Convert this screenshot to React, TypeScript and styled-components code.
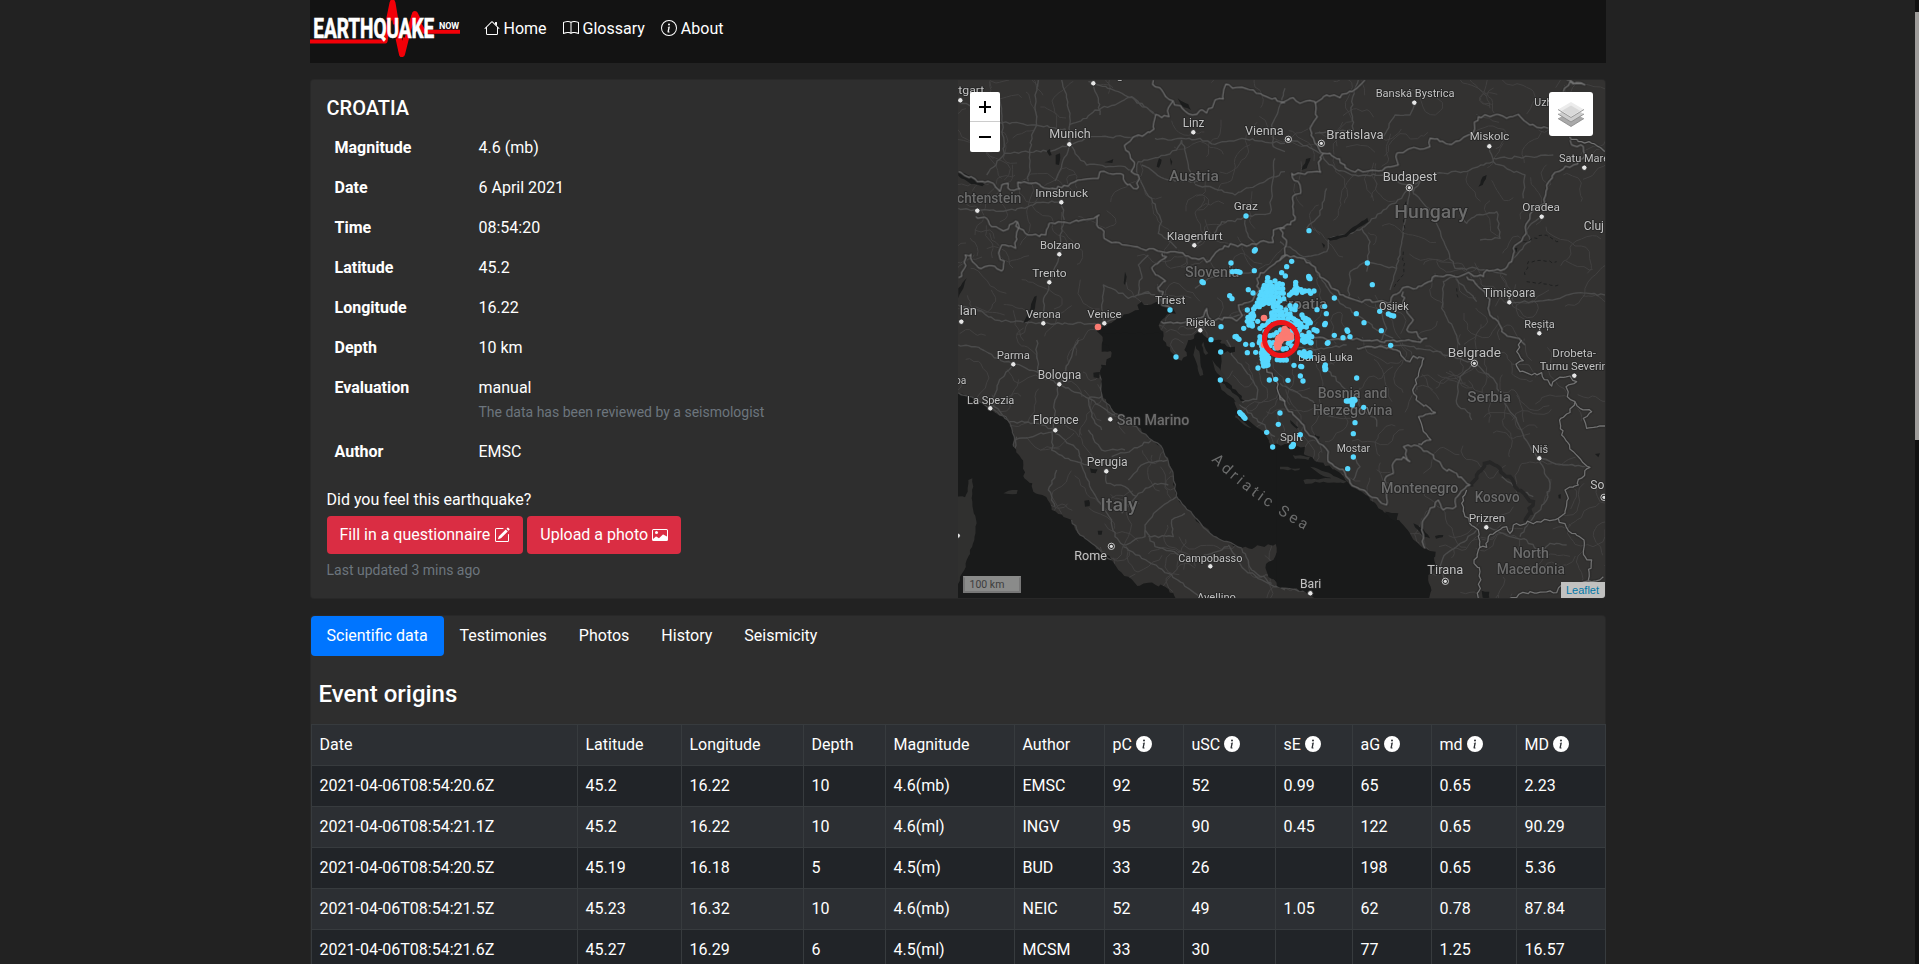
import React from "react";
import styled, { createGlobalStyle } from "styled-components";
import { BsBook, BsInfoCircle, BsInfoCircleFill, BsPencilSquare, BsCardImage } from "react-icons/bs";

const GlobalStyle = createGlobalStyle`
  *, *::before, *::after { box-sizing: border-box; }
  html, body { margin: 0; height: 964px; overflow: hidden; }
  body {
    background: #222;
    color: #fff;
    font-family: Roboto, "Liberation Sans", sans-serif;
    font-size: 16px;
    line-height: 1.5;
  }
`;

const Page = styled.div`
  display: flex;
  justify-content: space-between;
  height: 964px;
  padding-left: 309.5px;
  overflow: hidden;
`;

const Container = styled.div`
  width: 1296px;
  flex: none;
`;

const ScrollTrack = styled.div`
  width: 4px;
  height: 964px;
  padding-top: 12px;
  background: #111;
`;

const ScrollThumb = styled.div`
  height: 428px;
  background: #9f9d9b;
`;

const Navbar = styled.nav`
  display: flex;
  height: 63px;
  margin-bottom: 16px;
  background: #131313;
`;

const NavLinks = styled.div`
  display: flex;
  gap: 16px;
  padding: 17px 0 0 24px;
`;

const NavLink = styled.a`
  display: flex;
  gap: 4px;
  height: 24px;
  color: #fff;
  svg { margin-top: 3px; }
`;

const Card = styled.section`
  display: flex;
  height: 520px;
  margin-bottom: 16px;
  border: 1px solid rgba(0, 0, 0, 0.125);
  border-radius: 4px;
  background: #2e2e2e;
  overflow: hidden;
`;

const Info = styled.div`
  width: 647px;
  padding: 16px;
`;

const Place = styled.h5`
  margin: 0 0 8px;
  font-size: 20px;
  line-height: 24px;
  font-weight: 500;
`;

const Facts = styled.dl`
  display: grid;
  grid-template-columns: 144px 1fr;
  margin: 0 0 16px;
`;

const Term = styled.dt`
  padding: 8px;
  font-weight: 700;
`;

const Value = styled.dd`
  margin: 0;
  padding: 8px;
`;

const Muted = styled.small`
  display: block;
  font-size: 14px;
  line-height: 24px;
  color: #6c757d;
`;

const Question = styled.p`
  margin: 0 0 4px;
`;

const Actions = styled.div`
  display: flex;
  gap: 4px;
  margin-bottom: 4px;
`;

const Action = styled.button`
  display: flex;
  align-items: center;
  gap: 4px;
  height: 38px;
  padding: 0 13px;
  border: 0;
  border-radius: 4px;
  background: #da2d43;
  color: #fff;
  font: inherit;
  white-space: nowrap;
`;

const MapPane = styled.div`
  position: relative;
  width: 647px;
  height: 518px;
`;

const MapCanvas = styled.svg`
  display: block;
  font-family: "Roboto", sans-serif;
`;

const ZoomControl = styled.div`
  position: absolute;
  left: 12px;
  top: 12px;
  width: 30px;
  border-radius: 2px;
  background: #fff;
  overflow: hidden;
`;

const ZoomButton = styled.div`
  display: flex;
  justify-content: center;
  align-items: center;
  height: 30px;
  color: #000;
  &:first-child { border-bottom: 1px solid #ccc; }
`;

const LayersControl = styled.div`
  position: absolute;
  left: 591px;
  top: 12px;
  display: grid;
  place-items: center;
  width: 44px;
  height: 44px;
  border-radius: 3px;
  background: #fff;
`;

const ScaleBar = styled.div`
  position: absolute;
  left: 5px;
  top: 496px;
  width: 58px;
  height: 17px;
  padding-left: 5px;
  border: 2px solid #777;
  border-top-color: #8a8b8a;
  background: #8a8b8a;
  color: #3d3d3d;
  font-size: 10.5px;
  line-height: 13px;
`;

const Attribution = styled.div`
  position: absolute;
  right: 0;
  bottom: 0;
  width: 44px;
  height: 16px;
  background: #c1c1c0;
  color: #0078a8;
  font: 11px/17px "Liberation Sans", Arial, sans-serif;
  text-align: center;
`;

const DataCard = styled.section`
  height: 500px;
  border: 1px solid rgba(0, 0, 0, 0.125);
  border-radius: 4px;
  background: #2e2e2e;
`;

const Tabs = styled.div`
  display: flex;
`;

const Tab = styled.a<{ $active?: boolean }>`
  padding: 8px 16px;
  border-radius: 4px;
  color: #fff;
  background: ${(p) => (p.$active ? "#0075ff" : "transparent")};
`;

const Heading = styled.h4`
  margin: 24px 0 15px;
  padding-left: 8px;
  font-size: 24px;
  line-height: 28.8px;
  font-weight: 500;
`;

const Table = styled.table`
  width: 1294px;
  table-layout: fixed;
  border-collapse: collapse;
`;

const Row = styled.tr<{ $dark?: boolean }>`
  height: 41px;
  background: ${(p) => (p.$dark ? "#212428" : "#2c2f33")};
`;

const Cell = styled.td`
  height: 41px;
  padding: 8px;
  border: 1px solid #373b3e;
  line-height: 24px;
  white-space: nowrap;
`;

const HeadLabel = styled.span`
  display: flex;
  gap: 4px;
  svg { margin-top: 3px; }
`;

function HouseIcon() {
  return (
    <svg width="16" height="16" viewBox="0 0 16 16" fill="currentColor">
      <path fillRule="evenodd" d="M2 13.5V7h1v6.5a.5.5 0 0 0 .5.5h9a.5.5 0 0 0 .5-.5V7h1v6.5a1.5 1.5 0 0 1-1.5 1.5h-9A1.5 1.5 0 0 1 2 13.5zm11-11V6l-2-2V2.5a.5.5 0 0 1 .5-.5h1a.5.5 0 0 1 .5.5z" />
      <path fillRule="evenodd" d="M7.293 1.5a1 1 0 0 1 1.414 0l6.647 6.646a.5.5 0 0 1-.708.708L8 2.207 1.354 8.854a.5.5 0 1 1-.708-.708L7.293 1.5z" />
    </svg>
  );
}

function Logo() {
  return (
    <svg width="150" height="63" viewBox="0 0 150 63">
      <g fill="none" stroke="#f30008" strokeLinejoin="round">
        <path strokeWidth="4" d="M0 41.5H75.5L82.5 1 91.5 55 104 14 114 31.7H150" />
        <path strokeWidth="6" d="M79 20L82.5 3 86 24M88.5 38L92 54 96 38M102 24L105 14 110 24" />
      </g>
      <g fill="#fff" fontFamily="Roboto, sans-serif" fontWeight="700">
        <text x="3.3" y="38.3" fontSize="28.5" textLength="121" lengthAdjust="spacingAndGlyphs" stroke="#fff" strokeWidth="0.7">EARTHQUAKE</text>
        <text x="129" y="29" fontSize="9" textLength="20" lengthAdjust="spacing">NOW</text>
      </g>
    </svg>
  );
}

/* The map is drawn in four quadrants; each unit is a third of a pixel. */
const QUAD = { nw: [0, 0], ne: [975, 0], sw: [0, 795], se: [975, 795] } as const;
type Quad = keyof typeof QUAD;

const sea: [Quad, string][] = [
  ["nw", "M425 768L440 757 500 728 530 712 552 705 547 690 560 680 580 690 605 680 632 692 655 702 663 716 645 716 620 735 611 752 625 770 622 795 628 830 440 830 448 790Z"],
  ["nw", "M705 815L718 780 737 768 755 788 768 800 840 815 840 830 705 830Z"],
  ["sw", "M443 0L470 38 468 52 455 58 453 76 438 74 440 140 455 190 480 220 545 260 590 300 618 318 640 365 655 410 664 468 690 500 740 555 775 588 860 624 900 622 962 612 973 632 955 660 933 672 940 710 985 738 1050 738 1050 320 990 312 948 318 935 290 905 262 850 215 838 185 870 182 850 160 822 130 800 108 798 45 800 0 700 0 688 30 696 48 680 62 668 58 652 40 635 18 624 0 624 -20 443 -20Z"],
  ["sw", "M0 155L60 178 110 205 145 228 165 250 178 290 176 320 192 345 205 375 208 415 232 430 235 455 262 465 285 490 290 510 310 522 350 540 375 585 410 610 435 630 470 660 490 690 530 718 547 738 580 728 630 740 655 760 665 780 0 780Z"],
  ["se", "M-10 322L40 318 75 345 130 368 175 395 205 428 245 455 290 495 320 520 370 555 395 590 430 625 467 635 462 685 445 705 452 740 445 785 140 785 80 760 50 745 -10 738Z"],
];

const islands: [Quad, string][] = [
  ["sw", "M0 466L30 472 38 455 40 420 52 415 55 440 50 475 65 550 58 600 35 660 28 690 15 710 0 770Z"],
  ["sw", "M145 460L160 452 188 450 185 462 160 462Z"],
  ["sw", "M722 15L735 45 738 80 745 105 735 108 725 70 715 45Z M745 5L760 40 752 45 740 15Z M772 60L800 95 820 125 810 125 780 90Z M790 120L850 170 870 200 850 190 800 150Z M842 225L890 265 880 262 840 232Z"],
  ["se", "M38 345L90 350 85 360 45 357Z M0 380L60 385 58 390 0 388Z M70 420L160 412 180 428 130 425 75 432Z M90 380L135 395 200 425 190 430 120 403Z"],
];

const lakes: [Quad, string][] = [
  ["nw", "M10 288L38 300 70 318 88 328 82 334 48 327 10 302Z M205 745L222 710 238 665 245 662 240 700 225 735Z M275 228L285 222 290 240 283 242Z M302 240L315 235 312 270 302 268Z M448 262L475 252 472 264Z M668 70L700 88 708 105 680 92Z M605 275L612 250 620 254 612 278Z M510 590L515 605 510 630 506 625Z M645 248L652 260 648 272Z M10 640L35 610 25 640 10 670Z"],
  ["ne", "M142 490L195 478 238 445 262 428 265 440 240 455 200 485 150 497Z M65 285L78 252 92 248 80 280Z M595 335L608 305 620 300 608 330Z M125 503L135 510 132 520Z M700 520L712 518 710 530 702 530Z"],
  ["sw", "M405 385L428 388 422 400 408 398Z M388 482L402 480 404 498 390 500Z M428 572L442 572 440 584 430 584Z M415 98L435 96 432 115 416 112Z"],
  ["se", "M105 283L120 290 116 297 106 294Z M400 550L430 568 450 595 432 590 405 562Z M605 752L628 755 628 773 608 773Z M30 240L55 262 50 266 32 250Z M465 588L490 585 488 592 468 596Z M945 342L960 340 955 352Z M835 465L842 462 842 476 836 475Z M315 515L355 520 350 545 330 535Z"],
];

const borders: [Quad, string][] = [
  ["nw", "M595 15L600 35 620 45 632 65 655 78 640 98 642 125 620 128 602 118 597 162 570 178 550 180 508 212 525 240 538 268 528 290 550 300 545 342 510 322 505 300 460 295 435 290 430 310 395 312 360 320 320 338 290 340 230 325 188 322 195 342 165 345 160 325 140 330 135 350 115 325 90 322 60 312 10 290"],
  ["nw", "M655 80L690 108 712 120 725 118 738 105 755 114 772 98 780 75 805 72 812 28 840 38 895 45 935 65 990 84"],
  ["nw", "M62 425L95 430 110 455 145 468 160 462 182 438 205 465 232 480 272 480 282 445 310 440 350 442 382 435 432 420 425 450 440 462 447 490 470 503 540 515 608 528 660 530 710 550 745 548 755 562 770 548 808 512 905 508 925 497 955 502 955 465 990 460"],
  ["nw", "M188 438L182 520 140 510 132 540 148 558 140 588 110 572 70 578 52 560 48 538 30 540 28 580 10 608"],
  ["nw", "M620 535L635 545 590 578 602 600 632 618 608 638 625 650 620 690 652 702"],
  ["nw", "M618 740L655 745 690 742 720 738 745 725 755 700 770 735 820 728 845 738 862 722 850 690 880 682 910 650 905 610 935 585 990 540"],
  ["ne", "M0 85L40 68 60 85 105 80 112 125 90 160 105 205 130 235 150 235 215 288 295 288 355 270 350 235 380 225 450 215 450 190 508 208 575 178 595 125 650 118 680 130 715 118 750 150 805 160"],
  ["ne", "M105 85L140 60 180 68 230 40 255 15 M860 15L915 30 870 20 850 50 M870 195L875 210 910 215 915 240 880 270 850 282 825 292 800 330 795 385 760 405 745 438 730 485 700 520 695 560 675 582 620 585 610 605 560 595 525 605 500 600 465 602 455 618 410 640 380 635 340 660 332 682 300 678 235 678 190 660 155 640 130 610 95 570 60 548 20 540 0 555"],
  ["ne", "M130 235L115 262 122 292 75 298 35 295 60 330 62 355 38 365 40 405 45 435 0 462 20 500 15 545 M560 605L600 640 630 672 628 712 655 740 665 770 725 800 735 810"],
  ["ne", "M370 650L370 700 400 735 380 765 410 770 415 785 440 790 410 800 340 795 300 800 230 790 150 795 90 785 60 770"],
  ["ne", "M870 185L895 200 935 205 955 215 975 230"],
  ["sw", "M935 85L965 125 975 170 990 185"],
  ["se", "M0 165L20 205 65 250 100 290 145 335 145 365 195 398 210 428 250 450 305 490 320 495 318 410 340 400 340 368 370 350 390 365 370 320 415 318 460 345 490 385 530 400 570 435 540 460 525 485 528 500 490 510 475 480 430 540 425 570 435 625"],
  ["se", "M230 25L275 20 320 25 360 35 390 65 400 48 432 55 398 150 415 185 450 205 467 218 415 230 428 265 453 300 415 312"],
  ["se", "M725 0L710 35 730 62 708 72 720 95 755 105 785 98 815 138 830 118 870 108 890 125 858 140 862 170 885 185 860 222 842 235 845 285 880 335 930 382 895 418 895 435 855 450 865 475 855 520 835 535 770 545 700 555 690 580 680 560 625 590 620 622 600 622 595 570 555 530 545 490 560 450"],
  ["se", "M835 535L875 580 912 600 915 650 935 660 925 720 M600 620L582 670 600 695 595 775 M885 185L900 205 935 215 910 235 920 265 975 258 M690 775L750 755 830 758 845 735 935 725 970 710"],
];

const roads: [Quad, string][] = [
  ["nw", "M10 80L70 100 130 140 240 150 330 162 350 208 410 185 550 185 M125 55L140 100 148 235 95 300 M148 235L300 225 345 208 370 245 395 270 510 275 545 300 M250 15L240 60 245 150 230 180 220 320 M320 15L345 115 345 208 M345 148L395 130 420 105 480 90 530 65 600 120 M415 25L430 70 435 120 M345 210L320 270 300 318 M400 20L490 50 540 75 595 115"],
  ["nw", "M600 190L650 195 735 190 780 208 860 190 920 198 990 205 M680 195L700 270 720 325 M720 328L800 345 840 360 865 345 905 330 990 290 M680 195L665 225 610 248 550 260 545 290 570 345 590 370 620 440 610 475 665 520 M990 40L975 90 950 150 955 215 990 230 M730 320L640 315 560 270"],
  ["nw", "M10 400L70 408 160 405 210 400 245 382 320 380 328 435 M328 440L315 480 318 540 285 620 265 680 265 745 M10 690L70 705 120 735 265 745 445 745 500 730 M445 745L440 690 445 630 470 640 520 670 580 650 640 690 M870 435L880 485 905 515 M870 425L840 440 800 440 775 480 715 510 M870 425L945 415 960 250 M580 540L550 570 560 600 550 660 585 655 M720 640L760 610 830 600 900 590 M735 765L790 730 870 720"],
  ["ne", "M30 190L120 235 165 280 215 300 310 300 388 335 470 295 550 290 640 260 M628 215L640 260 690 285 735 300 730 370 M388 338L365 370 310 405 270 440 240 465 150 490 140 530 60 550 M388 338L375 440 360 530 350 580 330 645 M388 338L430 385 465 430 500 520 525 580 590 580 680 600 M235 15L215 80 220 165 105 175 M405 85L390 120 345 120 310 185 M525 600L490 620 485 700 520 760 540 810 M525 605L555 640 590 680 M688 682L765 680 830 672 880 655 975 660 M0 500L90 560 150 650 190 690 300 770 340 790"],
  ["ne", "M785 425L755 445 740 465 750 500 690 560 M540 420L560 445 590 420 650 410 660 490 600 495 M210 590L260 560 350 580 M210 590L205 670 M300 710L320 760 300 800 M640 250L750 245 820 240 M400 300L420 320 400 350 M140 340L120 420 80 460 M245 460L270 500 260 590"],
  ["sw", "M10 15L60 20 130 55 245 95 313 132 400 175 480 225 M313 132L300 180 295 270 M295 270L330 300 370 330 385 390 420 465 470 540 480 590 505 615 M175 70L130 130 110 190 165 248 M165 245L250 250 300 272 180 300 M245 0L248 95 M370 0L345 60 315 130 M440 100L440 170 400 175 M665 470L620 500 570 555 570 590 505 615 M505 620L560 655 640 700 700 745 740 775 M570 570L600 620 720 660 820 620 M640 435L600 430 550 460 500 520 M690 520L650 540 655 590 580 590 M860 625L890 690 950 730"],
  ["sw", "M640 360L570 370 520 420 M455 395L455 430 510 440 545 470 M300 500L280 450 305 390 M295 270L290 330 330 355 400 375 M400 175L410 230 440 270 M510 330L440 330 400 270 M590 300L530 330 470 350 M180 350L185 290 M820 615L870 690 930 725 990 750 M815 0L835 50 870 90 905 140 905 178 870 182 855 195 920 250 960 290"],
  ["se", "M583 70L540 110 530 190 570 220 575 240 M583 70L640 115 665 175 700 225 730 285 765 340 778 355 M778 355L850 375 920 380 M778 355L810 430 800 480 755 540 720 590 M583 70L520 50 450 30 390 20 300 15 M0 10L100 30 200 15 M135 80L180 130 230 170 M230 170L245 210 290 240 290 260 M220 350L240 380 220 420 M0 130L90 180 160 230 M495 722L480 680 500 640 560 600 590 570 M0 740L90 760 M665 410L700 440 760 470 M620 560L690 590 740 600 780 640 810 610 860 615"],
];

const coast: [Quad, string][] = [
  ["sw", "M440 170L455 190 480 220 545 260 590 300 618 318 640 365 655 410 664 468 690 500 740 555 775 588 860 624 M10 158L60 178 110 205 145 228 165 250 178 290 176 320"],
  ["sw", "M350 540L375 585 410 610 435 630 470 660"],
];

const shade: [Quad, string][] = [
  ["se", "M575 440L590 405 625 368 660 385 690 410 715 450 760 485 735 545"],
];

const brooks: [Quad, string][] = [
  ["ne", "M735 600L745 560 830 560 M730 500L790 480 840 500 M740 620L835 630 M530 640L535 670 M370 530L370 600 340 640 M378 380L370 470"],
];

/** Small deterministic generator for the web of minor roads. */
function minorRoads(): string {
  let s = 71;
  const r = () => ((s = (s * 16807) % 2147483647) / 2147483647);
  let d = "";
  for (let i = 0; i < 340; i++) {
    let x = r() * 1980;
    let y = r() * 1590;
    let a = r() * 6.28;
    d += `M${x.toFixed(0)} ${y.toFixed(0)}`;
    const n = 5 + Math.floor(r() * 10);
    for (let k = 0; k < n; k++) {
      a += (r() - 0.5) * 1.8;
      const l = 8 + r() * 14;
      x += Math.cos(a) * l;
      y += Math.sin(a) * l;
      d += `L${x.toFixed(0)} ${y.toFixed(0)}`;
    }
  }
  return d;
}

/** Breaks long straight segments into slightly irregular ones, as surveyed lines have. */
function rough(d: string, amount: number): string {
  let s = 29;
  const r = () => ((s = (s * 16807) % 2147483647) / 2147483647 - 0.5);
  return d
    .split("M")
    .filter((p) => p.trim())
    .map((part) => {
      const closed = part.includes("Z");
      const n = (part.match(/-?\d+/g) || []).map(Number);
      let out = `M${n[0]} ${n[1]}`;
      for (let i = 2; i + 1 < n.length; i += 2) {
        const dx = n[i] - n[i - 2];
        const dy = n[i + 1] - n[i - 1];
        const steps = Math.max(1, Math.round(Math.hypot(dx, dy) / 11));
        for (let k = 1; k < steps; k++) {
          out += `L${(n[i - 2] + (dx * k) / steps + r() * amount).toFixed(1)} ${(n[i - 1] + (dy * k) / steps + r() * amount).toFixed(1)}`;
        }
        out += `L${n[i]} ${n[i + 1]}`;
      }
      return out + (closed ? "Z" : "");
    })
    .join("");
}

type Label = [Quad, string, number, number, number, number, ("country" | "city")?];
/* quadrant, text, left, baseline, width, size, kind */
const labels: Label[] = [
  ["nw", "tgart", 10, 58, 78, 35],
  ["nw", "Nuremberg", 325, 13, 180, 35],
  ["nw", "Munich", 283, 188, 124, 36],
  ["nw", "Linz", 683, 156, 65, 36],
  ["nw", "Vienna", 870, 180, 116, 38],
  ["nw", "Austria", 642, 318, 150, 43, "country"],
  ["nw", "chtenstein", 6, 385, 193, 42, "country"],
  ["nw", "Innsbruck", 241, 366, 158, 35],
  ["nw", "Graz", 836, 405, 73, 35],
  ["nw", "Klagenfurt", 635, 495, 168, 35],
  ["nw", "Bolzano", 255, 522, 121, 35],
  ["nw", "Slovenia", 690, 606, 163, 42, "country"],
  ["nw", "Trento", 232, 605, 103, 35],
  ["nw", "Triest", 600, 686, 91, 34],
  ["nw", "lan", 14, 721, 52, 38],
  ["nw", "Verona", 213, 729, 104, 34],
  ["nw", "Venice", 397, 728, 103, 34],
  ["nw", "Rijeka", 692, 752, 90, 34],
  ["ne", "Banská Bystrica", 287, 67, 237, 35],
  ["ne", "Uzh", 763, 92, 54, 35],
  ["ne", "Bratislava", 139, 192, 172, 38],
  ["ne", "Miskolc", 569, 196, 119, 35],
  ["ne", "Satu Mare", 837, 262, 150, 35],
  ["ne", "Budapest", 308, 317, 163, 38],
  ["ne", "Hungary", 343, 430, 220, 56, "country"],
  ["ne", "Oradea", 727, 408, 113, 35],
  ["ne", "Cluj", 911, 466, 61, 36],
  ["ne", "Timișoara", 609, 667, 157, 36],
  ["ne", "Croatia", -6, 703, 148, 42, "country"],
  ["ne", "Osijek", 297, 706, 89, 33],
  ["ne", "Reșița", 733, 759, 91, 35],
  ["sw", "Parma", 125, 58, 100, 35],
  ["sw", "Bologna", 248, 116, 131, 36],
  ["sw", "oa", 0, 132, 34, 35],
  ["sw", "La Spezia", 36, 191, 142, 35],
  ["sw", "Florence", 233, 253, 138, 36],
  ["sw", "San Marino", 485, 256, 218, 43, "country"],
  ["sw", "Perugia", 395, 378, 123, 36],
  ["sw", "Italy", 436, 512, 112, 56, "country"],
  ["sw", "Rome", 358, 659, 98, 38],
  ["sw", "Campobasso", 670, 666, 192, 35],
  ["sw", "Avellino", 726, 782, 117, 34],
  ["se", "Belgrade", 503, 50, 160, 38],
  ["se", "Banja Luka", 54, 64, 165, 35],
  ["se", "Drobeta-", 817, 52, 131, 34],
  ["se", "Turnu Severin", 779, 91, 204, 34],
  ["se", "Bosnia and", 113, 174, 209, 42, "country"],
  ["se", "Herzegovina", 98, 224, 239, 42, "country"],
  ["se", "Serbia", 562, 187, 131, 43, "country"],
  ["se", "Split", 0, 304, 68, 35],
  ["se", "Mostar", 170, 336, 100, 35],
  ["se", "Niš", 756, 339, 48, 35],
  ["se", "Montenegro", 303, 458, 232, 42, "country"],
  ["se", "Kosovo", 584, 486, 135, 42, "country"],
  ["se", "So", 931, 448, 42, 36],
  ["se", "Prizren", 566, 546, 110, 35],
  ["se", "North", 698, 653, 109, 42, "country"],
  ["se", "Macedonia", 650, 703, 205, 42, "country"],
  ["se", "Tirana", 442, 701, 108, 37],
  ["se", "Bari", 60, 743, 64, 36],
];

const towns: [Quad, number, number][] = [
  ["nw", 16, 76], ["nw", 415, 25], ["nw", 343, 208], ["nw", 715, 172], ["nw", 319, 382], ["nw", 67, 407],
  ["nw", 718, 511], ["nw", 313, 538], ["nw", 283, 622], ["nw", 265, 745], ["nw", 448, 745], ["nw", 19, 740],
  ["nw", 736, 766], ["ne", 403, 83], ["ne", 628, 214], ["ne", 913, 278], ["ne", 785, 425], ["ne", 688, 682],
  ["ne", 778, 775], ["sw", 175, 73], ["sw", 313, 133], ["sw", 106, 205], ["sw", 301, 271], ["sw", 466, 238],
  ["sw", 454, 394], ["sw", 766, 679], ["sw", 8, 587], ["se", 883, 107], ["se", 778, 355], ["se", 619, 562], ["se", 91, 760],
];

const capitals: [Quad, number, number][] = [
  ["ne", 25, 193], ["ne", 124, 205], ["ne", 388, 338], ["sw", 469, 619], ["se", 583, 70], ["se", 496, 724], ["se", 972, 472],
];

/* Epicentres, in thirds of a pixel from (225, 135) of the map canvas. */
const quakes =
  "-30,300 -12,441 198,18 387,62 226,119 223,123 335,154 320,170 305,188 316,198 153,159 157,185 168,184 175,185 180,187 223,182 66,215 70,218 149,257 156,266 562,159 577,224 205,239 219,249 386,199 390,206 387,204 263,203 262,214 271,217 285,213 253,226 263,228 275,228 290,226 298,221 307,223 250,235 260,240 272,238 284,236 297,235 308,236 244,246 255,250 265,248 277,247 290,248 302,249 310,250 240,256 250,258 261,260 273,258 284,260 296,262 311,266 237,268 248,270 259,269 270,270 281,270 232,279 243,280 254,279 267,280 280,281 293,279 300,272 226,290 238,290 248,283 280,291 292,289 302,293 221,297 202,300 284,303 275,309 295,303 306,307 318,300 330,287 347,287 335,297 345,299 276,318 287,316 299,315 310,318 321,313 330,312 213,314 221,318 218,310 204,322 210,327 218,327 202,334 210,337 207,345 216,342 217,348 233,334 191,355 240,355 248,347 265,335 274,329 285,328 297,328 310,329 325,326 333,322 341,327 347,331 354,334 362,341 320,339 331,341 343,344 352,344 361,353 366,350 366,315 370,323 377,325 385,330 391,338 376,332 384,340 380,328 388,334 347,217 347,226 352,235 344,238 355,240 341,246 349,249 363,239 367,247 328,255 334,250 375,243 387,243 392,250 402,243 337,246 463,264 434,289 439,311 411,299 436,340 434,344 529,311 552,338 599,304 625,312 633,316 641,318 604,362 632,406 463,376 489,383 501,360 503,364 510,380 444,398 442,400 402,359 408,361 411,363 379,351 387,368 390,378 395,380 366,376 378,379 372,387 383,385 386,391 392,398 366,391 373,396 379,394 393,398 352,367 345,362 358,360 165,380 169,379 173,385 177,388 123,350 93,389 122,426 121,510 197,403 217,404 202,428 227,427 240,380 240,391 238,398 245,399 245,408 247,419 244,429 251,427 246,439 255,437 262,433 247,448 257,446 266,444 249,458 257,459 263,453 251,468 258,467 264,465 234,474 292,449 301,450 310,450 319,450 262,422 342,466 362,469 365,470 361,498 369,513 324,511 287,508 268,510 359,428 365,431 372,425 376,432 382,432 388,431 391,439 369,437 378,440 390,428 436,465 434,470 437,476 435,479 530,504 499,573 504,573 510,573 516,569 522,568 525,571 517,576 517,585 518,580 551,592 525,638 520,671 520,741 503,776 179,607 182,611 187,615 191,620 195,625 300,609 295,643 260,667 361,674 278,711 334,710 338,709 340,704 340,703 260,345 255,365 270,377 268,397 270,407 280,375 290,368 280,398 302,360 325,400 335,408 330,393 319,415 309,417 285,414 335,362 340,366 335,388"
    .split(" ")
    .map((p) => p.split(",").map(Number));

const strongQuakes = [
  [252, 324], [314, 357], [321, 364], [312, 370], [322, 373], [331, 377], [307, 376], [314, 384], [323, 383], [301, 381],
  [296, 385], [305, 386], [301, 392], [294, 390], [291, 403], [296, 405], [293, 412], [252, 404], [333, 381],
];

function Lines({ items, amount, ...rest }: { items: [Quad, string][]; amount: number } & React.SVGProps<SVGGElement>) {
  return (
    <g {...rest}>
      {items.map(([q, d], i) => (
        <path key={i} transform={`translate(${QUAD[q].join(" ")})`} d={rough(d, amount)} />
      ))}
    </g>
  );
}

function SeismicMap() {
  return (
    <MapCanvas width="647" height="518" viewBox="9 15 1941 1554">
      <rect x="0" y="0" width="1980" height="1600" fill="#333231" />
      <path d={minorRoads()} fill="none" stroke="#434242" strokeWidth="2.8" />
      <Lines items={roads} amount={7} fill="none" stroke="#4a4a4a" strokeWidth="4.2" strokeLinejoin="round" />
      <Lines items={sea} amount={9} fill="#191a1a" />
      <Lines items={coast} amount={6} fill="none" stroke="#464646" strokeWidth="4" />
      <Lines items={islands} amount={5} fill="#30302f" />
      <Lines items={lakes} amount={4} fill="#1b1c1c" />
      <Lines items={shade} amount={12} fill="none" stroke="#262626" strokeWidth="11" />
      <Lines items={brooks} amount={8} fill="none" stroke="#1f2020" strokeWidth="3" strokeDasharray="10 8" />
      <Lines items={borders} amount={10} fill="none" stroke="#262626" strokeWidth="9" strokeLinejoin="round" opacity={0.65} />
      <Lines items={borders} amount={10} fill="none" stroke="#727272" strokeWidth="3.8" strokeLinejoin="round" />
      <g stroke="#242424" strokeWidth="5" paintOrder="stroke" strokeLinejoin="round">
        {labels.map(([q, text, x, y, w, size, kind]) => (
          <text
            key={q + text}
            x={QUAD[q][0] + x}
            y={QUAD[q][1] + y}
            fontSize={size}
            fontWeight={kind ? 500 : 400}
            fill={kind ? "#6c6c6c" : "#c2c2c2"}
            textLength={w}
            lengthAdjust="spacingAndGlyphs"
          >
            {text}
          </text>
        ))}
      </g>
      <path id="adriatic" d="M768 1156Q900 1285 1085 1385" fill="none" />
      <text fill="#6a6b6b" fontSize="46" letterSpacing="9.5">
        <textPath href="#adriatic">Adriatic Sea</textPath>
      </text>
      <g fill="#e6e6e6" stroke="#252525" strokeWidth="3">
        {towns.map(([q, x, y], i) => (
          <circle key={i} cx={QUAD[q][0] + x} cy={QUAD[q][1] + y} r="8.3" />
        ))}
      </g>
      {capitals.map(([q, x, y], i) => (
        <g key={i} transform={`translate(${QUAD[q][0] + x} ${QUAD[q][1] + y})`}>
          <circle r="9.5" fill="#2a2a2a" stroke="#d0d0d0" strokeWidth="2.8" />
          <circle r="4.8" fill="#dedede" />
        </g>
      ))}
      <g transform="translate(675 405)">
        <g fill="#57d8ff">
          {quakes.map(([x, y], i) => (
            <circle key={i} cx={x} cy={y} r="8" />
          ))}
        </g>
        <g fill="#fb7b72">
          {strongQuakes.map(([x, y], i) => (
            <circle key={i} cx={x} cy={y} r="10" />
          ))}
        </g>
        <circle cx="303" cy="387" r="49.5" fill="none" stroke="#ed1519" strokeWidth="15" />
      </g>
      <circle cx="429" cy="756" r="10" fill="#fb7b72" />
    </MapCanvas>
  );
}

function LayersIcon() {
  return (
    <svg width="26" height="26" viewBox="0 0 26 26">
      <path d="M0 17.5L13 25.5 26 17.5 13 10Z" fill="#a9a9a9" />
      <path d="M0 17.5L13 25.5 26 17.5" fill="none" stroke="#858585" strokeWidth="0.8" />
      <path d="M0 13L13 21 26 13 13 6Z" fill="#cdcdcd" />
      <path d="M0 13L13 21 26 13" fill="none" stroke="#929292" strokeWidth="1" />
      <path d="M0 8.5L13 1 26 8.5 13 16.5Z" fill="#ececec" />
      <path d="M4 9.8L13 4.5 22 9.8 13 15.5Z" fill="#d9d9d9" />
      <path d="M0 8.5L13 16.5 26 8.5" fill="none" stroke="#999" strokeWidth="1" />
    </svg>
  );
}

const facts: [string, string, string?][] = [
  ["Magnitude", "4.6 (mb)"],
  ["Date", "6 April 2021"],
  ["Time", "08:54:20"],
  ["Latitude", "45.2"],
  ["Longitude", "16.22"],
  ["Depth", "10 km"],
  ["Evaluation", "manual", "The data has been reviewed by a seismologist"],
  ["Author", "EMSC"],
];

const columns: [string, number, boolean?][] = [
  ["Date", 266], ["Latitude", 104], ["Longitude", 122], ["Depth", 82], ["Magnitude", 129], ["Author", 90],
  ["pC", 79, true], ["uSC", 92, true], ["sE", 77, true], ["aG", 79, true], ["md", 85, true], ["MD", 89, true],
];

const rows = [
  ["2021-04-06T08:54:20.6Z", "45.2", "16.22", "10", "4.6(mb)", "EMSC", "92", "52", "0.99", "65", "0.65", "2.23"],
  ["2021-04-06T08:54:21.1Z", "45.2", "16.22", "10", "4.6(ml)", "INGV", "95", "90", "0.45", "122", "0.65", "90.29"],
  ["2021-04-06T08:54:20.5Z", "45.19", "16.18", "5", "4.5(m)", "BUD", "33", "26", "", "198", "0.65", "5.36"],
  ["2021-04-06T08:54:21.5Z", "45.23", "16.32", "10", "4.6(mb)", "NEIC", "52", "49", "1.05", "62", "0.78", "87.84"],
  ["2021-04-06T08:54:21.6Z", "45.27", "16.29", "6", "4.5(ml)", "MCSM", "33", "30", "", "77", "1.25", "16.57"],
];

export default function App() {
  return (
    <Page>
      <GlobalStyle />
      <Container>
        <Navbar>
          <Logo />
          <NavLinks>
            <NavLink><HouseIcon />Home</NavLink>
            <NavLink><BsBook />Glossary</NavLink>
            <NavLink><BsInfoCircle />About</NavLink>
          </NavLinks>
        </Navbar>
        <Card>
          <Info>
            <Place>CROATIA</Place>
            <Facts>
              {facts.map(([term, value, note]) => (
                <React.Fragment key={term}>
                  <Term>{term}</Term>
                  <Value>
                    {value}
                    {note && <Muted>{note}</Muted>}
                  </Value>
                </React.Fragment>
              ))}
            </Facts>
            <Question>Did you feel this earthquake?</Question>
            <Actions>
              <Action>Fill in a questionnaire <BsPencilSquare /></Action>
              <Action>Upload a photo <BsCardImage /></Action>
            </Actions>
            <Muted>Last updated 3 mins ago</Muted>
          </Info>
          <MapPane>
            <SeismicMap />
            <ZoomControl>
              <ZoomButton>
                <svg width="12" height="12"><path d="M0 6H12M6 0V12" stroke="#000" strokeWidth="2" /></svg>
              </ZoomButton>
              <ZoomButton>
                <svg width="12" height="12"><path d="M0 6H12" stroke="#000" strokeWidth="2" /></svg>
              </ZoomButton>
            </ZoomControl>
            <LayersControl><LayersIcon /></LayersControl>
            <ScaleBar>100 km</ScaleBar>
            <Attribution>Leaflet</Attribution>
          </MapPane>
        </Card>
        <DataCard>
          <Tabs>
            <Tab $active>Scientific data</Tab>
            <Tab>Testimonies</Tab>
            <Tab>Photos</Tab>
            <Tab>History</Tab>
            <Tab>Seismicity</Tab>
          </Tabs>
          <Heading>Event origins</Heading>
          <Table>
            <colgroup>
              {columns.map(([name, width]) => (
                <col key={name} width={width} />
              ))}
            </colgroup>
            <tbody>
              <Row>
                {columns.map(([name, , hint]) => (
                  <Cell key={name}>
                    <HeadLabel>{name}{hint && <BsInfoCircleFill />}</HeadLabel>
                  </Cell>
                ))}
              </Row>
              {rows.map((row, i) => (
                <Row key={i} $dark={i % 2 === 0}>
                  {row.map((text, k) => (
                    <Cell key={k}>{text}</Cell>
                  ))}
                </Row>
              ))}
            </tbody>
          </Table>
        </DataCard>
      </Container>
      <ScrollTrack><ScrollThumb /></ScrollTrack>
    </Page>
  );
}
